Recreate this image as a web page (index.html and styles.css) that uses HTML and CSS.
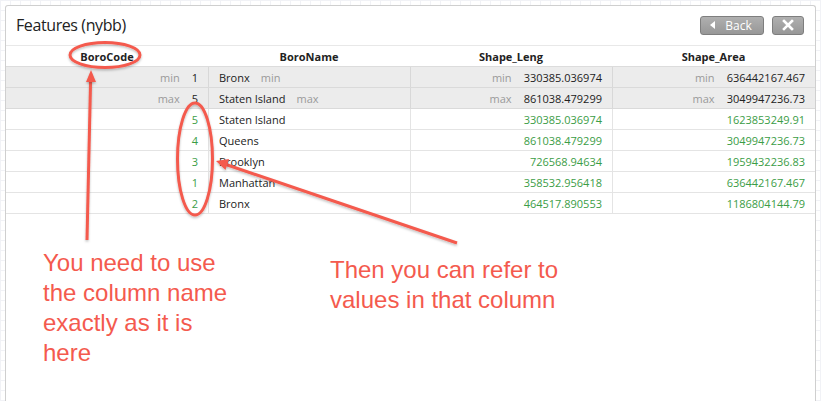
FILE: index.html
```html
<!DOCTYPE html>
<html>
<head>
<meta charset="utf-8">
<link rel="stylesheet" href="styles.css">
</head>
<body>
<div class="panel">
  <div class="head">
    <div class="title">Features (nybb)</div>
    <div class="btns">
      <div class="btn back"><span class="tri"></span>Back</div>
      <div class="btn close">
        <svg width="12" height="12" viewBox="0 0 12 12"><path d="M2 2 L10 10 M10 2 L2 10" stroke="#fff" stroke-width="2.6" stroke-linecap="square"/></svg>
      </div>
    </div>
  </div>
  <div class="grid">
    <div class="row hdr">
      <div class="cell c">BoroCode</div>
      <div class="cell c">BoroName</div>
      <div class="cell c">Shape_Leng</div>
      <div class="cell c">Shape_Area</div>
    </div>
    <div class="row stat">
      <div class="cell r"><span class="lbl">min</span>1</div>
      <div class="cell l">Bronx<span class="lbl after">min</span></div>
      <div class="cell r"><span class="lbl">min</span>330385.036974</div>
      <div class="cell r"><span class="lbl">min</span>636442167.467</div>
    </div>
    <div class="row stat">
      <div class="cell r"><span class="lbl">max</span>5</div>
      <div class="cell l">Staten Island<span class="lbl after">max</span></div>
      <div class="cell r"><span class="lbl">max</span>861038.479299</div>
      <div class="cell r"><span class="lbl">max</span>3049947236.73</div>
    </div>
    <div class="row data">
      <div class="cell r g">5</div>
      <div class="cell l">Staten Island</div>
      <div class="cell r g">330385.036974</div>
      <div class="cell r g">1623853249.91</div>
    </div>
    <div class="row data">
      <div class="cell r g">4</div>
      <div class="cell l">Queens</div>
      <div class="cell r g">861038.479299</div>
      <div class="cell r g">3049947236.73</div>
    </div>
    <div class="row data">
      <div class="cell r g">3</div>
      <div class="cell l">Brooklyn</div>
      <div class="cell r g">726568.94634</div>
      <div class="cell r g">1959432236.83</div>
    </div>
    <div class="row data">
      <div class="cell r g">1</div>
      <div class="cell l">Manhattan</div>
      <div class="cell r g">358532.956418</div>
      <div class="cell r g">636442167.467</div>
    </div>
    <div class="row data">
      <div class="cell r g">2</div>
      <div class="cell l">Bronx</div>
      <div class="cell r g">464517.890553</div>
      <div class="cell r g">1186804144.79</div>
    </div>
  </div>
</div>

<svg class="marks" width="821" height="401" viewBox="0 0 821 401">
  <defs>
    <filter id="sh" x="-10%" y="-10%" width="120%" height="120%">
      <feDropShadow dx="0" dy="1.5" stdDeviation="1" flood-color="#000" flood-opacity="0.25"/>
    </filter>
  </defs>
  <g filter="url(#sh)" fill="none" stroke="#f45a4e" stroke-width="3">
    <ellipse cx="105" cy="55" rx="35" ry="12.5"/>
    <ellipse cx="195" cy="159" rx="17.5" ry="56"/>
    <line x1="87" y1="240" x2="90.6" y2="80"/>
    <line x1="457" y1="243" x2="226" y2="164.5"/>
  </g>
  <g fill="#f45a4e" filter="url(#sh)">
    <polygon points="91,70 86,82 96,82"/>
    <polygon points="216,161 229,159 225.5,170"/>
  </g>
</svg>

<div class="note n1">You need to use<br>the column name<br>exactly as it is<br>here</div>
<div class="note n2">Then you can refer to<br>values in that column</div>
</body>
</html>
```

FILE: styles.css
```css
html, body {
  margin: 0;
  padding: 0;
}
body {
  width: 821px;
  height: 401px;
  overflow: hidden;
  position: relative;
  background-color: #fff;
  background-image:
    linear-gradient(to right, #f1f2f6 1px, transparent 1px),
    linear-gradient(to bottom, #f1f2f6 1px, transparent 1px);
  background-size: 10px 10px;
  font-family: "Open Sans", "DejaVu Sans", sans-serif;
}
.panel {
  margin: 5px 0 0 5px;
  width: 809px;
  height: 395px;
  background: #fff;
  border: 1px solid #cfcfcf;
  border-bottom: none;
  border-radius: 3px 3px 0 0;
  box-sizing: content-box;
}
.head {
  border-bottom: 1px solid #e8e8e8;
  display: flex;
  align-items: center;
  justify-content: space-between;
  padding: 0 11px 0 10px;
  box-sizing: border-box;
  height: 40px;
}
.title {
  font-size: 16px;
  letter-spacing: -0.4px;
  color: #222;
  margin-top: -1px;
}
.btns {
  display: flex;
  gap: 8px;
  margin-top: -1px;
}
.btn {
  height: 19px;
  box-sizing: border-box;
  border: 1px solid #7e7e7e;
  border-radius: 3px;
  background: linear-gradient(#b0b0b0, #979797);
  color: #fff;
  font-size: 12px;
  display: flex;
  align-items: center;
  justify-content: center;
}
.back {
  width: 64px;
  gap: 10px;
  padding-right: 2px;
}
.tri {
  width: 0;
  height: 0;
  border-top: 4px solid transparent;
  border-bottom: 4px solid transparent;
  border-right: 5px solid #fff;
}
.close {
  width: 32px;
}
.grid {
  display: flex;
  flex-direction: column;
}
.row {
  display: grid;
  grid-template-columns: 202px 202px 202px 203px;
  height: 21px;
  box-sizing: border-box;
  border-bottom: 1px solid #e4e4e4;
  font-size: 11px;
  color: #222;
}
.row.hdr {
  font-weight: bold;
  border-bottom-color: #dcdcdc;
}
.row.stat {
  background: #ececec;
  border-bottom-color: #dadada;
}
.cell {
  display: flex;
  align-items: center;
  white-space: nowrap;
  border-left: 1px solid #e4e4e4;
  box-sizing: border-box;
}
.cell:first-child {
  border-left: none;
}
.hdr .cell {
  border-left: none;
}
.stat .cell {
  border-left-color: #d8d8d8;
}
.c { justify-content: center; }
.r { justify-content: flex-end; padding-right: 10px; }
.l { justify-content: flex-start; padding-left: 10px; }
.g { color: #3b9d46; }
.lbl {
  color: #9a9a9a;
  margin-right: 12px;
}
.lbl.after {
  margin-right: 0;
  margin-left: 11px;
}
.marks {
  position: absolute;
  left: 0;
  top: 0;
  pointer-events: none;
}
.note {
  position: absolute;
  font-family: "Liberation Sans", Arial, sans-serif;
  font-size: 24px;
  line-height: 30px;
  color: #f45a4e;
}
.n1 { left: 43px; top: 248px; }
.n2 { left: 330px; top: 255px; }
```
